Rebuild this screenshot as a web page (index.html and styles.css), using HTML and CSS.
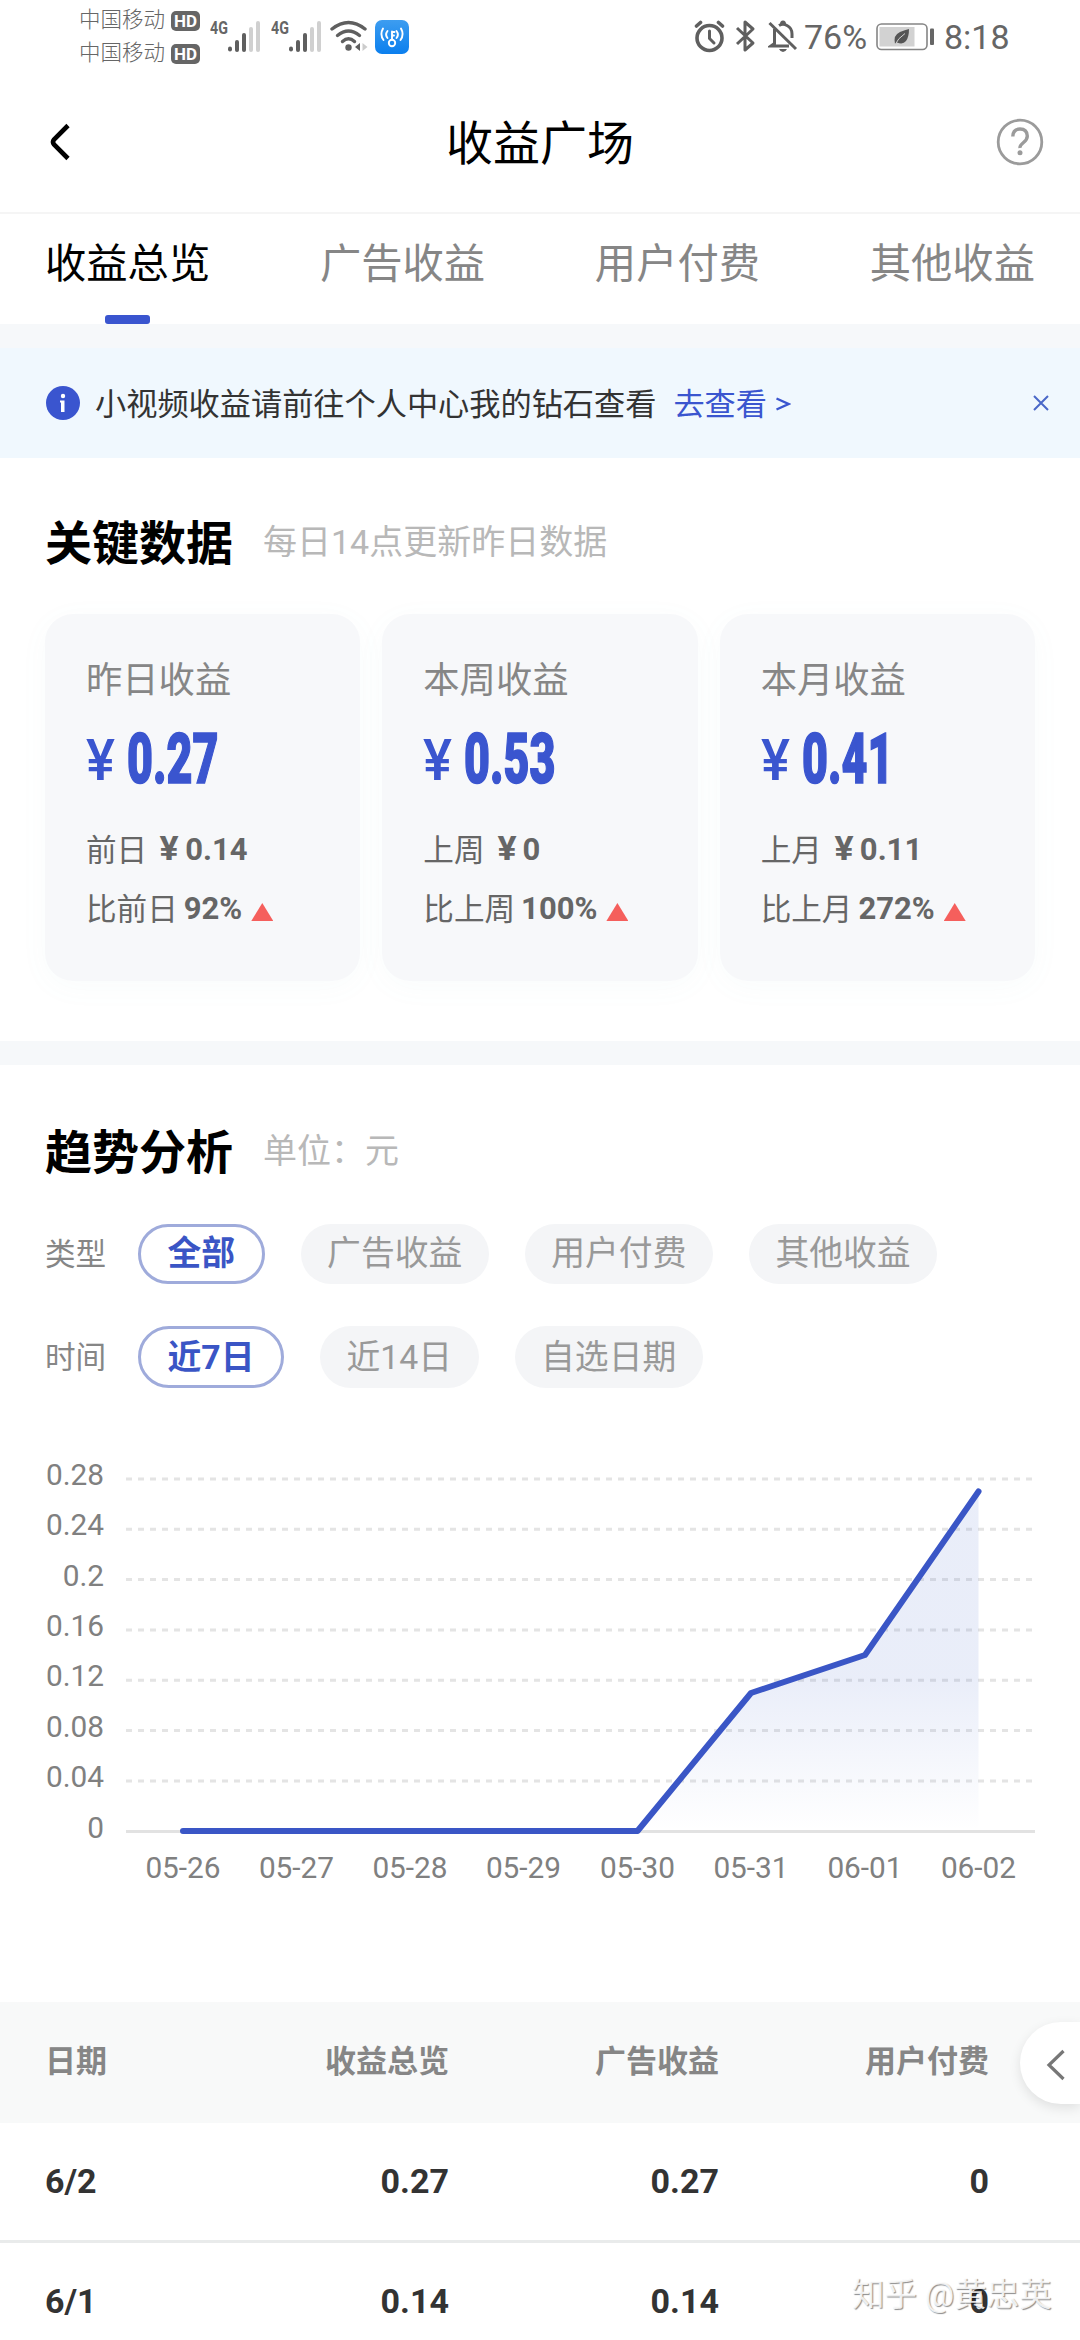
FILE: index.html
```html
<!DOCTYPE html>
<html lang="zh-CN">
  <head>
    <meta charset="UTF-8" />
    <title>收益广场</title>
    <link rel="stylesheet" href="styles.css">
  </head>
  <body>
    <!-- Status bar -->
    <div class="status-bar">
      <div class="carriers">
        <div class="carrier">中国移动<span class="hd">HD</span></div>
        <div class="carrier">中国移动<span class="hd">HD</span></div>
      </div>
      <div class="signal">
        <span class="net">4G</span>
        <svg width="33" height="31" viewBox="0 0 33 31">
          <g fill="#5f5f5f"><rect x="0" y="25.5" width="4" height="5" rx="2" /><rect x="7" y="19" width="4" height="12" rx="2" /><rect x="14" y="12" width="4" height="19" rx="2" /></g>
          <g fill="#d0d0d0"><rect x="21" y="6" width="4" height="25" rx="2" /><rect x="28" y="0" width="4" height="31" rx="2" /></g>
        </svg>
      </div>
      <div class="signal second">
        <span class="net">4G</span>
        <svg width="33" height="31" viewBox="0 0 33 31">
          <g fill="#5f5f5f"><rect x="0" y="25.5" width="4" height="5" rx="2" /><rect x="7" y="19" width="4" height="12" rx="2" /><rect x="14" y="12" width="4" height="19" rx="2" /></g>
          <g fill="#d0d0d0"><rect x="21" y="6" width="4" height="25" rx="2" /><rect x="28" y="0" width="4" height="31" rx="2" /></g>
        </svg>
      </div>
      <svg class="wifi" width="38" height="32" viewBox="0 0 38 32">
        <g fill="none" stroke="#5f5f5f" stroke-width="3.4" stroke-linecap="round">
          <path d="M2 9Q18.500 -4 35 9" />
          <path d="M7.500 15.500Q18.500 6.500 29.500 15.500" />
          <path d="M12.500 21.500Q18.500 16 24.500 21.500" />
        </g>
        <circle cx="18.500" cy="27.500" r="3.200" fill="#5f5f5f" />
        <path d="M30 23v8l-5-4z" fill="#5f5f5f" />
        <path d="M32.500 23v8l5-4z" fill="#ccc" />
      </svg>
      <svg class="wifi-key" width="34" height="34" viewBox="0 0 34 34">
        <defs>
          <linearGradient id="keyBg" x1="0" y1="0" x2="0" y2="1">
            <stop offset="0" stop-color="#3d9df0" />
            <stop offset="1" stop-color="#0b7fee" />
          </linearGradient>
        </defs>
        <rect width="34" height="34" rx="7" fill="url(#keyBg)" />
        <g fill="none" stroke="#fff" stroke-width="1.900" stroke-linecap="round">
          <circle cx="17" cy="23" r="3.200" />
          <path d="M17 19.500v-8M17 12h2.500M17 15.500h2" />
          <path d="M12.500 18Q9.800 14.500 12.500 11M8.500 20Q4.500 14.500 8 8.500M21.500 18Q24.200 14.500 21.500 11M25.500 20Q29.500 14.500 26 8.500" />
        </g>
      </svg>
      <div class="status-right">
        <svg width="32" height="34" viewBox="0 0 32 34">
          <g fill="none" stroke="#5f5f5f" stroke-width="3.600" stroke-linecap="round">
            <circle cx="15.500" cy="19" r="12.500" />
            <path d="M15.500 12v7.500l4.500 4.500" stroke-width="3" />
            <path d="M2.500 7L6.500 3.500M28.500 7L24.500 3.500" />
          </g>
        </svg>
        <svg class="bluetooth" width="22" height="34" viewBox="0 0 22 34">
          <path d="M2 9l16 15-8 7V3l8 7L2 25" fill="none" stroke="#5f5f5f" stroke-width="3" stroke-linejoin="round" />
        </svg>
        <svg class="mute" width="30" height="34" viewBox="0 0 30 34">
          <g fill="none" stroke="#5f5f5f" stroke-width="3">
            <path d="M1.500 4L28 30" />
            <path d="M6.500 10v14.500L3 27h18M11 6.500Q15 4 19 6.500Q24 9 24 15v4" />
          </g>
          <path d="M12 5q0-3.500 3-3.500t3 3.500zM11 30h8q-1.500 3-4 3t-4-3z" fill="#5f5f5f" />
        </svg>
        <span class="battery-text">76%</span>
        <svg class="battery" width="60" height="28" viewBox="0 0 60 28">
          <rect x="1" y="1" width="50" height="25.500" rx="4.500" fill="#fff" stroke="#858585" stroke-width="1.600" />
          <rect x="3.500" y="4" width="35" height="19.500" fill="#d2d2d2" />
          <path d="M19 21q-2-9 5-12q5-2 9-3q0 8-3 12q-3 4-9 1.500z" fill="#555" />
          <path d="M18.500 22.500Q22 15 29 10.500" fill="none" stroke="#d2d2d2" stroke-width="1" />
          <rect x="54" y="5.500" width="4" height="16.500" rx="1" fill="#666" />
        </svg>
        <span class="clock">8:18</span>
      </div>
    </div>

    <!-- Page header -->
    <header class="header">
      <svg class="back" width="24" height="38" viewBox="0 0 24 38">
        <path d="M19 2.500L5 16.500Q3 19 5 21.500L19 35.500" fill="none" stroke="#000" stroke-width="4.600" />
      </svg>
      <h1>收益广场</h1>
      <svg class="help" width="48" height="48" viewBox="0 0 48 48">
        <circle cx="24" cy="24" r="21.800" fill="none" stroke="#9b9b9b" stroke-width="2.800" />
        <path d="M16.800 18.500Q17 11 24 11T31.300 18Q31.300 21.500 27.500 24.500T24 30" fill="none" stroke="#9b9b9b" stroke-width="3.400" />
        <circle cx="24" cy="34.800" r="2.500" fill="#9b9b9b" />
      </svg>
    </header>

    <!-- Tabs -->
    <nav class="tabs">
      <a class="tab active">收益总览</a>
      <a class="tab">广告收益</a>
      <a class="tab">用户付费</a>
      <a class="tab">其他收益</a>
    </nav>

    <!-- Notice -->
    <div class="notice">
      <svg width="34" height="34" viewBox="0 0 34 34">
        <circle cx="17" cy="17" r="17" fill="#3a55cf" />
        <circle cx="17" cy="10" r="2.200" fill="#fff" />
        <path d="M14 14.500h4.500V26h-3.500V16.500h-1z" fill="#fff" />
      </svg>
      <span class="notice-text">小视频收益请前往个人中心我的钻石查看</span>
      <a class="notice-link">去查看</a>
      <svg class="notice-arrow" width="16" height="18" viewBox="0 0 16 18">
        <path d="M1.500 3.500L13.500 9L1.500 14.500" fill="none" stroke="#3a55cf" stroke-width="2.400" />
      </svg>
      <svg class="close" width="16" height="16" viewBox="0 0 16 16">
        <path d="M1 1l14 14M15 1L1 15" fill="none" stroke="#4a68c8" stroke-width="2" />
      </svg>
    </div>

    <!-- Key data -->
    <section class="key-data">
      <div class="section-title">
        <h2>关键数据</h2>
        <span>每日14点更新昨日数据</span>
      </div>
      <div class="cards">
        <div class="card">
          <div class="card-name">昨日收益</div>
          <div class="card-value"><span class="yen">¥</span><span class="num">0.27</span></div>
          <div class="card-row"><span>前日</span><b><i>¥</i>0.14</b></div>
          <div class="card-row"><span>比前日</span><b>92%</b><span class="up"></span></div>
        </div>
        <div class="card">
          <div class="card-name">本周收益</div>
          <div class="card-value"><span class="yen">¥</span><span class="num">0.53</span></div>
          <div class="card-row"><span>上周</span><b><i>¥</i>0</b></div>
          <div class="card-row"><span>比上周</span><b>100%</b><span class="up"></span></div>
        </div>
        <div class="card">
          <div class="card-name">本月收益</div>
          <div class="card-value"><span class="yen">¥</span><span class="num">0.41</span></div>
          <div class="card-row"><span>上月</span><b><i>¥</i>0.11</b></div>
          <div class="card-row"><span>比上月</span><b>272%</b><span class="up"></span></div>
        </div>
      </div>
    </section>

    <!-- Trend -->
    <section class="trend">
      <div class="section-title">
        <h2>趋势分析</h2>
        <span>单位：元</span>
      </div>
      <div class="filter">
        <label>类型</label>
        <button class="pill active">全部</button>
        <button class="pill">广告收益</button>
        <button class="pill">用户付费</button>
        <button class="pill">其他收益</button>
      </div>
      <div class="filter time">
        <label>时间</label>
        <button class="pill active">近7日</button>
        <button class="pill">近14日</button>
        <button class="pill">自选日期</button>
      </div>
      <svg class="chart" width="1080" height="460" viewBox="0 0 1080 460">
        <defs>
          <linearGradient id="areaFill" gradientUnits="userSpaceOnUse" x1="0" y1="51" x2="0" y2="391">
            <stop offset="0" stop-color="#3a5fc8" stop-opacity="0.11" />
            <stop offset="0.550" stop-color="#3a5fc8" stop-opacity="0.11" />
            <stop offset="1" stop-color="#3a5fc8" stop-opacity="0" />
          </linearGradient>
        </defs>
        <g class="grid">
          <path d="M126 39H1034M126 89.300H1034M126 139.600H1034M126 190H1034M126 240.300H1034M126 290.600H1034M126 341H1034" />
        </g>
        <path class="axis" d="M126 391.500H1035" />
        <g class="y-labels">
          <text x="104" y="45">0.28</text>
          <text x="104" y="95">0.24</text>
          <text x="104" y="145.500">0.2</text>
          <text x="104" y="195.500">0.16</text>
          <text x="104" y="246">0.12</text>
          <text x="104" y="296.500">0.08</text>
          <text x="104" y="346.500">0.04</text>
          <text x="104" y="397.500">0</text>
        </g>
        <path d="M637.500 391L751 253L865 215L978.500 51.500V391Z" fill="url(#areaFill)" />
        <path class="line" d="M183 391H637.500L751 253L865 215L978.500 51.500" />
        <g class="x-labels">
          <text x="183" y="437.500">05-26</text>
          <text x="296.500" y="437.500">05-27</text>
          <text x="410" y="437.500">05-28</text>
          <text x="523.500" y="437.500">05-29</text>
          <text x="637.500" y="437.500">05-30</text>
          <text x="751" y="437.500">05-31</text>
          <text x="865" y="437.500">06-01</text>
          <text x="978.500" y="437.500">06-02</text>
        </g>
      </svg>
    </section>

    <!-- Detail table -->
    <div class="table">
      <div class="row head"><span>日期</span><span>收益总览</span><span>广告收益</span><span>用户付费</span></div>
      <div class="row"><span>6/2</span><span>0.27</span><span>0.27</span><span>0</span></div>
      <div class="row"><span>6/1</span><span>0.14</span><span>0.14</span><span>0</span></div>
      <div class="drawer">
        <svg width="20" height="32" viewBox="0 0 20 32">
          <path d="M17.500 2L3 16L17.500 30" fill="none" stroke="#777" stroke-width="3.200" />
        </svg>
      </div>
      <div class="watermark">知乎 @黄忠英</div>
    </div>
  </body>
</html>
```
FILE: styles.css
```css
/* Global Styles & Variables */
:root {
  --primary-color: #3a55cf;
  --light-bg: #f6f8fa;
  --gray-text: #868686;
  --font-family: Roboto, "Noto Sans CJK SC", sans-serif;
}

* {
  margin: 0;
  padding: 0;
  box-sizing: border-box;
}

html,
body {
  width: 1080px;
  height: 2340px;
  overflow: hidden;
}

body {
  font-family: var(--font-family);
  background: #fff;
  color: #333;
}

svg {
  display: block;
  flex: none;
}

/* Status bar */
.status-bar {
  display: flex;
  height: 72px;
  padding-left: 79px;
  color: #666;
}

.carriers {
  width: 131px;
  padding-top: 3px;
}

.carrier {
  display: flex;
  align-items: center;
  height: 33px;
  font-size: 21.5px;
  font-weight: 300;
  line-height: 28px;
}

.hd {
  width: 29px;
  height: 20px;
  margin: 2px 0 0 6px;
  border-radius: 5px;
  background: #666;
  color: #fff;
  font-size: 17px;
  font-weight: 700;
  line-height: 20px;
  text-align: center;
}

.signal {
  display: flex;
  width: 61px;
  padding-top: 21px;
}

.net {
  width: 18px;
  font-size: 19px;
  font-weight: 700;
  line-height: 14px;
  transform: scaleX(0.75);
  transform-origin: left;
}

.wifi {
  margin: 20px 7px 0 -2px;
}

.wifi-key {
  margin-top: 20px;
}

.status-right {
  display: flex;
  margin-left: 285px;
  padding-top: 19px;
}

.bluetooth {
  margin-left: 9px;
}

.mute {
  margin-left: 11px;
}

.battery-text,
.clock {
  font-size: 34px;
  line-height: 36px;
}

.battery-text {
  width: 72px;
  margin-left: 6px;
}

.battery {
  margin-top: 4px;
}

.clock {
  margin-left: 8px;
}

/* Header */
.header {
  display: flex;
  align-items: center;
  justify-content: space-between;
  height: 142px;
  padding: 0 36px 0 49px;
  border-bottom: 2px solid #f5f5f5;
}

.header h1 {
  padding-top: 4px;
  color: #000;
  font-size: 47px;
  font-weight: 400;
  line-height: 60px;
}

.back {
  margin-right: 11px;
}

/* Tabs */
.tabs {
  display: flex;
  justify-content: space-between;
  height: 110px;
  padding: 18px 45px 0;
}

.tab {
  position: relative;
  height: 92px;
  color: var(--gray-text);
  font-size: 41.3px;
  line-height: 65px;
}

.tab.active {
  color: #000;
}

.tab.active::after {
  content: "";
  position: absolute;
  left: 60px;
  bottom: 0;
  width: 45px;
  height: 9px;
  border-radius: 3px;
  background: var(--primary-color);
}

/* Notice */
.notice {
  display: flex;
  align-items: center;
  height: 134px;
  padding: 0 31px 0 46px;
  border-top: 24px solid #f6f8fa;
  background: #f0f8fe;
  font-size: 31.2px;
}

.notice-text,
.notice-link {
  padding-bottom: 4px;
}

.notice-text {
  margin-left: 15px;
}

.notice-link {
  margin-left: 17px;
  color: var(--primary-color);
}

.notice-arrow {
  margin: 1px 0 0 8px;
}

.close {
  margin-left: auto;
}

/* Section titles */
.section-title {
  display: flex;
  align-items: center;
  height: 60px;
}

.section-title h2,
.section-title span {
  padding-bottom: 8px;
}

.section-title h2 {
  color: #000;
  font-size: 47px;
  font-weight: 700;
}

.section-title span {
  margin-left: 30px;
  color: #b8b8b8;
  font-size: 34px;
}

/* Key data cards */
.key-data {
  height: 607px;
  padding: 55px 45px 0;
  border-bottom: 24px solid var(--light-bg);
}

.cards {
  display: grid;
  grid-template-columns: repeat(3, 1fr);
  gap: 22px;
  margin-top: 41px;
}

.card {
  height: 367px;
  padding: 39px 0 0 41px;
  border-radius: 28px;
  background: #f7f8fa;
  box-shadow: 0 6px 30px rgba(90, 170, 170, 0.04);
}

.card-name {
  height: 56px;
  color: var(--gray-text);
  font-size: 36.3px;
  line-height: 56px;
}

.card-value {
  display: flex;
  align-items: flex-end;
  height: 80px;
  color: var(--primary-color);
}

.yen {
  width: 41px;
  font-size: 58px;
  font-weight: 500;
  line-height: 58px;
  transform: scaleX(0.94);
  transform-origin: left;
}

.num {
  font-size: 70px;
  font-weight: 900;
  line-height: 60px;
  transform: scaleX(0.64);
  transform-origin: left;
  -webkit-text-stroke: 1.6px var(--primary-color);
}

.card-row {
  display: flex;
  align-items: center;
  height: 59px;
  color: #666;
  font-size: 30.6px;
}

.card-row span {
  padding-bottom: 3px;
}

.card-value + .card-row {
  margin-top: 31px;
}

.card-row b {
  margin-left: 6px;
  font-size: 31px;
  line-height: 40px;
}

.card-row i {
  display: inline-block;
  width: 32px;
  font-size: 33px;
  font-style: normal;
  line-height: 36px;
  text-align: center;
  transform: scaleX(1.08);
}

.card-row .up {
  width: 22px;
  height: 18px;
  margin: 7px 0 0 9px;
  padding: 0;
  background: #f55f5c;
  clip-path: polygon(50% 0, 100% 100%, 0 100%);
}

/* Trend */
.trend {
  height: 937px;
  padding: 57px 0 0 45px;
}

.filter {
  display: flex;
  align-items: center;
  gap: 36px;
  height: 60px;
  margin-top: 42px;
}

.filter.time {
  height: 62px;
}

.filter label {
  width: 57px;
  padding-bottom: 5px;
  color: var(--gray-text);
  font-size: 30.6px;
  white-space: nowrap;
}

.pill {
  height: 100%;
  padding: 0 26.5px;
  border: none;
  border-radius: 31px;
  background: #f4f5f7;
  color: #999;
  font-family: var(--font-family);
  font-size: 33.8px;
  line-height: 60px;
}

.pill.active {
  border: 3px solid #9fabdb;
  background: #fff;
  color: #3a55c5;
  font-weight: 700;
  line-height: 54px;
}

.time .pill {
  padding-top: 2px;
}

.chart {
  margin: 52px 0 0 -45px;
}

.grid path {
  stroke: #e4e4e4;
  stroke-width: 3;
  stroke-dasharray: 6 6;
}

.axis {
  stroke: #e2e2e2;
  stroke-width: 3;
}

.line {
  fill: none;
  stroke: #3a56c6;
  stroke-width: 6;
  stroke-linecap: round;
  stroke-linejoin: round;
}

.y-labels,
.x-labels {
  fill: #808080;
  font-size: 29.8px;
}

.y-labels {
  text-anchor: end;
}

.x-labels {
  text-anchor: middle;
}

/* Table */
.table {
  position: relative;
}

.row {
  display: grid;
  grid-template-columns: 134px 270px 270px 270px;
  align-items: center;
  height: 120px;
  padding: 0 0 2px 45px;
  border-bottom: 3px solid #e9ebeb;
  font-size: 34px;
  font-weight: 700;
}

.row span + span {
  text-align: right;
}

.row.head {
  height: 121px;
  padding-bottom: 8px;
  border-bottom: none;
  background: #f8f9f9;
  color: var(--gray-text);
  font-size: 31px;
}

/* Side button over the table */
.drawer {
  position: absolute;
  top: 20px;
  right: 0;
  display: flex;
  align-items: center;
  width: 60px;
  height: 82px;
  padding: 4px 0 0 26px;
  border-radius: 41px 0 0 41px;
  background: #fff;
  box-shadow: 0 4px 12px rgba(0, 0, 0, 0.1);
}

.watermark {
  position: absolute;
  top: 269px;
  left: 852px;
  color: rgba(255, 255, 255, 0.85);
  font-size: 32.5px;
  line-height: 48px;
  white-space: nowrap;
  text-shadow: 1px 1px 1px rgba(0, 0, 0, 0.45);
}
```
